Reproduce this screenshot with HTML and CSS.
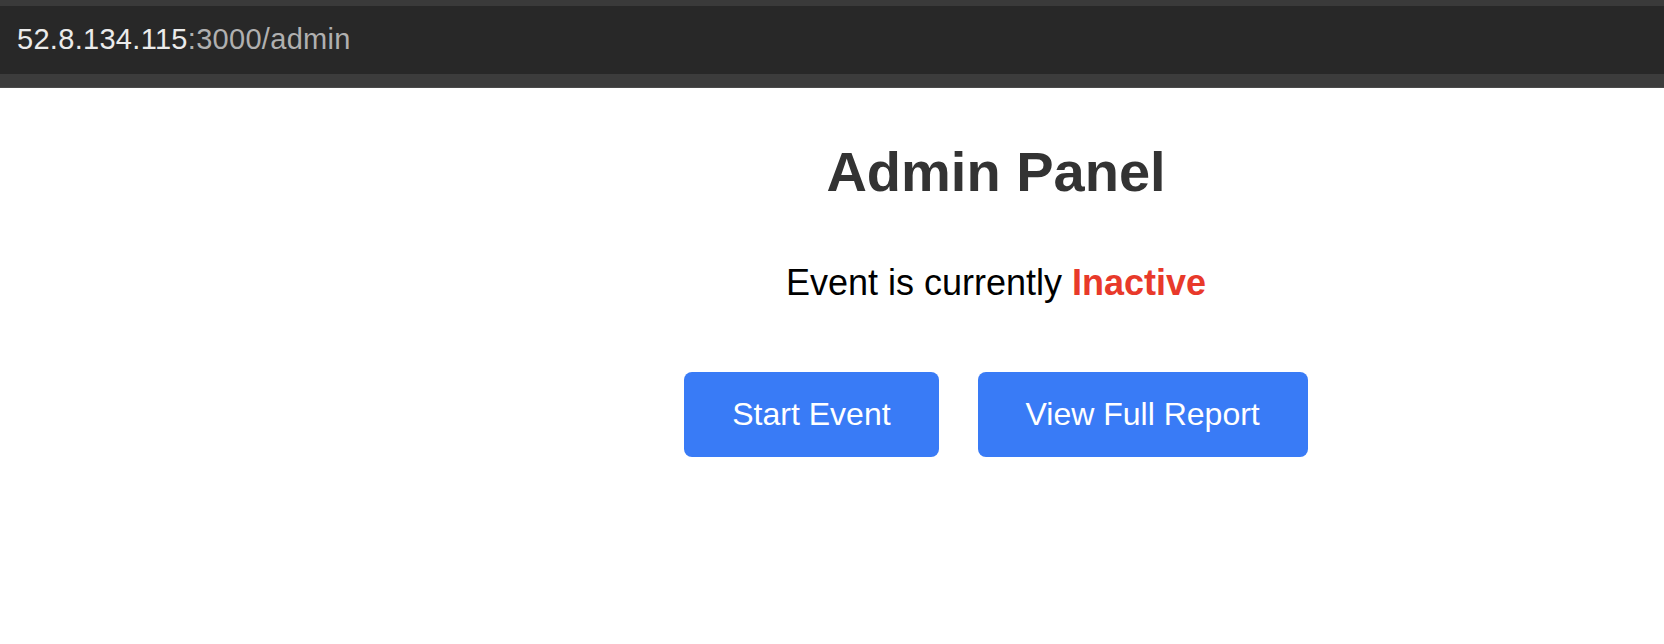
FILE: index.html
```html
<!DOCTYPE html>
<html lang="en">
<head>
<meta charset="utf-8">
<title>Admin Panel</title>
<link rel="stylesheet" href="styles.css">
</head>
<body>
<header class="chrome">
  <div class="chrome-top"></div>
  <div class="urlbar"><span class="host">52.8.134.115</span><span class="path">:3000/admin</span></div>
  <div class="chrome-bottom"></div>
</header>
<main class="page">
  <div class="gutter"></div>
  <section class="panel">
    <h1 class="title">Admin Panel</h1>
    <p class="status">Event is currently <span class="inactive">Inactive</span></p>
    <div class="actions">
      <button class="btn">Start Event</button>
      <button class="btn">View Full Report</button>
    </div>
  </section>
</main>
</body>
</html>
```
FILE: styles.css
```css
html, body {
  margin: 0;
  padding: 0;
  background: #ffffff;
  font-family: "Liberation Sans", Arial, Helvetica, sans-serif;
}

.chrome {
  display: flex;
  flex-direction: column;
}

.chrome-top {
  height: 6px;
  background: #3a3a3a;
}

.urlbar {
  height: 68px;
  box-sizing: border-box;
  padding: 17px 0 0 17px;
  background: #282828;
  font-size: 29px;
  line-height: 33px;
  letter-spacing: 0.3px;
}

.host {
  color: #ebebeb;
}

.path {
  color: #b0b0b0;
}

.chrome-bottom {
  height: 13px;
  background: #3c3c3c;
  border-bottom: 1px solid #4a4a4a;
}

.page {
  display: grid;
  grid-template-columns: 328px 1fr;
  height: 556px;
}

.panel {
  display: flex;
  flex-direction: column;
  align-items: center;
  text-align: center;
}

.title {
  margin: 52px 0 0;
  font-size: 56px;
  line-height: 64px;
  font-weight: bold;
  color: #333333;
}

.status {
  margin: 58px 0 0;
  font-size: 36px;
  line-height: 41px;
  color: #000000;
}

.inactive {
  color: #e8392a;
  font-weight: bold;
}

.actions {
  display: flex;
  gap: 39px;
  margin-top: 69px;
}

.btn {
  font-family: inherit;
  font-size: 32px;
  line-height: 37px;
  padding: 24px 48px;
  color: #ffffff;
  background: #397bf6;
  border: none;
  border-radius: 8px;
  cursor: pointer;
}
```
